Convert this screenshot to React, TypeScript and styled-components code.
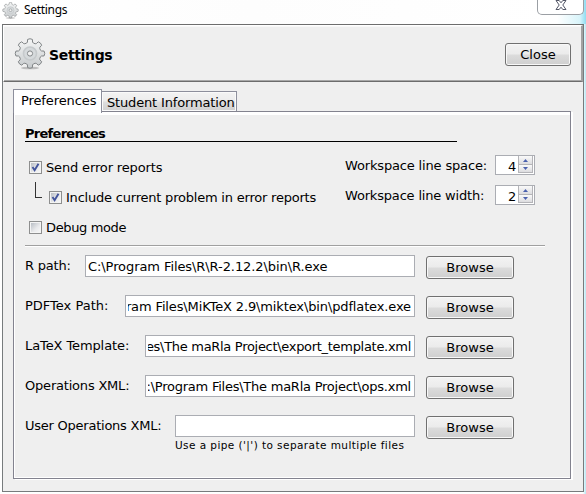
import React from "react";
import styled, { createGlobalStyle, css } from "styled-components";

const GlobalStyle = createGlobalStyle`
  * { box-sizing: border-box; }
  html, body { margin: 0; padding: 0; overflow: hidden; }
  body { font: 13px/16px Verdana, "DejaVu Sans", sans-serif; color: #000; background: #fff; }
`;

const Window = styled.div`
  width: 586px;
  height: 494px;
  display: flex;
  flex-direction: column;
  padding: 0 2px 2px 2px;
  background: linear-gradient(to right, #fff 0 583px, #e4f7fb 584px, #b5e7f3 586px);
`;

const TitleBar = styled.div`
  height: 24px;
  flex: none;
  display: flex;
  justify-content: space-between;
  align-items: flex-start;
  margin-right: -2px;
  padding-right: 2px;
  background: linear-gradient(to right, #fff 0, #fdfdfd 250px, #fff 555px, #d8f4fa 578px, #8edcf1 584px);
`;

const Caption = styled.div`
  display: flex;
  align-items: center;
  gap: 5px;
  height: 20px;
  font: 12px/16px "Segoe UI", "Noto Sans", sans-serif;
  letter-spacing: -0.3px;
`;

const WindowClose = styled.div`
  width: 47px;
  height: 15px;
  display: flex;
  justify-content: center;
  border: 1px solid #9b9fa4;
  border-top: 0;
  border-radius: 0 0 5px 5px;
  background: #fff;
`;

const Frame = styled.div`
  width: 582px;
  height: 468px;
  display: flex;
  flex-direction: column;
  border: 1px solid #777b7d;
  border-top-color: #6d6d6d;
  background: #efefef;
`;

const Header = styled.div`
  height: 57px;
  flex: none;
  display: flex;
  align-items: center;
  justify-content: space-between;
  padding: 2px 10px 0 10px;
  border: 1px solid #fff;
  border-right: 2px solid #a2a2a2;
  border-bottom: 1px solid #6c6c6c;
  box-shadow: inset 0 -1px #a8a8a8, inset 0 1px #f8f8f8;
`;

const Brand = styled.div`
  display: flex;
  align-items: center;
  gap: 3px;
  padding-bottom: 2px;
`;

const BrandName = styled.div`
  font-size: 14px;
  font-weight: bold;
  letter-spacing: -0.35px;
  padding-top: 2px;
`;

const Button = styled.button<{ $width: number }>`
  width: ${(p) => p.$width}px;
  height: 23px;
  flex: none;
  padding: 1px 0 0;
  border: 1px solid #707070;
  border-radius: 3px;
  background: linear-gradient(#f3f3f3 0, #ebebeb 49%, #dcdcdc 51%, #cfcfcf 100%);
  box-shadow: inset 0 0 0 1px #f8f8f8;
  font: inherit;
  color: #000;
`;

const Tabs = styled.div`
  display: flex;
  align-items: flex-end;
  height: 29px;
  flex: none;
  padding-left: 10px;
`;

const Tab = styled.div<{ $active?: boolean }>`
  display: flex;
  align-items: center;
  white-space: nowrap;
  border: 1px solid #8d8f9c;
  border-bottom: 0;
  ${(p) =>
    p.$active
      ? css`
          width: 89px;
          height: 24px;
          margin-bottom: -2px;
          padding: 0 0 1px 7px;
          background: #fff;
          position: relative;
        `
      : css`
          width: 136px;
          height: 20px;
          margin-left: -1px;
          padding: 3px 0 0 5px;
          background: linear-gradient(#f3f3f3 0, #ececec 48%, #dedede 52%, #d0d0d0 100%);
          box-shadow: inset 0 0 0 1px #fafafa;
        `}
`;

const Pane = styled.div`
  width: 558px;
  height: 368px;
  flex: none;
  display: flex;
  flex-direction: column;
  margin-left: 10px;
  border: 1px solid #83838f;
  box-shadow: inset 0 3px #fff, inset 1px -1px #fff, 2px 1px #fff;
  padding: 14px 0 0 11px;
`;

const SectionTitle = styled.div`
  width: 432px;
  height: 16px;
  flex: none;
  border-bottom: 1px solid #000;
  font-weight: bold;
`;

const Options = styled.div`
  display: flex;
  height: 104px;
  flex: none;
  width: 520px;
  border-bottom: 1px solid #a0a0a0;
  box-shadow: 0 1px #fff;
`;

const Checks = styled.div`
  width: 320px;
  padding-top: 11px;
`;

const CheckRow = styled.div<{ $nested?: boolean }>`
  height: 30px;
  display: flex;
  align-items: center;
  padding-left: ${(p) => (p.$nested ? 10 : 4)}px;
  gap: 7px;
`;

const Text = styled.span<{ $spacing?: number }>`
  white-space: nowrap;
  letter-spacing: ${(p) => p.$spacing ?? 0}px;
`;

const CheckItem = styled.div`
  display: flex;
  align-items: flex-start;
  height: 16px;
  gap: 4px;
`;

const Branch = styled.div`
  width: 7px;
  height: 16px;
  align-self: flex-start;
  margin-top: -1px;
  border-left: 1px solid #333;
  border-bottom: 1px solid #333;
`;

const Box = styled.div`
  width: 13px;
  height: 13px;
  margin-top: 1px;
  border: 1px solid #8e8f8f;
  padding: 1px;
  background: linear-gradient(135deg, #b9bec5, #e9eaec 60%, #f6f6f6) content-box, #f4f4f4;
  svg { display: block; }
`;

const Spins = styled.div`
  padding-top: 13px;
  display: flex;
  flex-direction: column;
  gap: 10px;
`;

const SpinRow = styled.div`
  width: 190px;
  height: 20px;
  display: flex;
  justify-content: space-between;
`;

const SpinLabel = styled(Text)`
  padding-top: 3px;
`;

const Spinner = styled.div`
  width: 40px;
  height: 20px;
  display: flex;
  border: 1px solid #abadb3;
  background: #fff;
  justify-content: flex-end;
  padding-right: 1px;
`;

const SpinValue = styled.div`
  width: 10px;
  padding-top: 3px;
`;

const Arrows = styled.div`
  width: 15px;
  height: 17px;
  padding: 0 1px 0 1px;
  background: #b4b4b8;
`;

const Arrow = styled.div<{ $down?: boolean }>`
  height: ${(p) => (p.$down ? 7 : 8)}px;
  margin-bottom: 1px;
  display: flex;
  align-items: center;
  justify-content: center;
  background: linear-gradient(#fafafa, #dcdcdf);
`;

const Paths = styled.div`
  display: flex;
  flex-direction: column;
  padding-top: 9px;
`;

const PathRow = styled.div`
  height: 40px;
  display: flex;
  align-items: flex-start;
`;

const PathLabel = styled.div<{ $width: number }>`
  width: ${(p) => p.$width}px;
  padding-top: 3px;
`;

const Field = styled.div<{ $width: number }>`
  width: ${(p) => p.$width}px;
  height: 22px;
  display: flex;
  padding: 3px 3px 0 2px;
  border: 1px solid #abadb3;
  background: #fff;
`;

const Clip = styled.div<{ $end?: boolean }>`
  width: 100%;
  overflow: hidden;
  display: flex;
  justify-content: ${(p) => (p.$end ? "flex-end" : "flex-start")};
`;

const ButtonSlot = styled.div`
  padding: 1px 0 0 11px;
`;

const FieldStack = styled.div`
  display: flex;
  flex-direction: column;
`;

const Hint = styled.div`
  height: 14px;
  font-size: 10.5px;
  line-height: 14px;
  margin-top: 1px;
  letter-spacing: 0.43px;
  white-space: nowrap;
`;

const GEAR = (() => {
  const pts: string[] = [];
  for (let i = 0; i < 8; i++) {
    const a = (i * Math.PI) / 4 - Math.PI / 2;
    const at = (r: number, d: number) =>
      `${(16 + r * Math.cos(a + d)).toFixed(2)} ${(15.5 + r * Math.sin(a + d)).toFixed(2)}`;
    pts.push(`${i ? "L" : "M"}${at(11, -0.3)}L${at(11.7, -0.22)}L${at(14.3, -0.17)}Q${at(15.4, 0)} ${at(14.3, 0.17)}L${at(11.7, 0.22)}L${at(11, 0.3)}`);
  }
  return pts.join("") + "Z";
})();

const Gear = ({ size, id }: { size: number; id: string }) => (
  <svg width={size} height={size} viewBox="0 0 32 32">
    <defs>
      <linearGradient id={id} x1="0" y1="0" x2="0" y2="1">
        <stop offset="0" stopColor="#f5f6f6" />
        <stop offset="1" stopColor="#c6cacc" />
      </linearGradient>
    </defs>
    <ellipse cx="16" cy="30" rx="9" ry="1.3" fill="#8c8c8c" opacity="0.5" />
    <path d={GEAR} fill={`url(#${id})`} stroke="#818587" strokeWidth="1" strokeLinejoin="round" />
    <circle cx="16" cy="15.5" r="6.5" fill="#d6dadc" stroke="#c6cacc" strokeWidth="1.6" />
    <circle cx="16" cy="15.5" r="2.6" fill="#f1f1f1" stroke="#85898b" strokeWidth="1" />
  </svg>
);

const Check = ({ label, checked, spacing }: { label: string; checked?: boolean; spacing?: number }) => (
  <CheckItem>
    <Box>
      {checked && (
        <svg width="9" height="9" viewBox="0 0 9 9">
          <path d="M1.5 4L3.6 7.2L7.5 0.8" fill="none" stroke="#42549c" strokeWidth="1.9" />
        </svg>
      )}
    </Box>
    <Text $spacing={spacing}>{label}</Text>
  </CheckItem>
);

const Spin = ({ label, value, spacing }: { label: string; value: number; spacing?: number }) => (
  <SpinRow>
    <SpinLabel $spacing={spacing}>{label}</SpinLabel>
    <Spinner>
      <SpinValue>{value}</SpinValue>
      <Arrows>
        <Arrow>
          <svg width="5" height="3" viewBox="0 0 5 3"><path d="M0 3L2.5 0L5 3Z" fill="#4a60ae" /></svg>
        </Arrow>
        <Arrow $down>
          <svg width="5" height="3" viewBox="0 0 5 3"><path d="M0 0H5L2.5 3Z" fill="#4a60ae" /></svg>
        </Arrow>
      </Arrows>
    </Spinner>
  </SpinRow>
);

const PATHS = [
  { label: "R path:", value: "C:\\Program Files\\R\\R-2.12.2\\bin\\R.exe", offset: 60, ls: -0.2, vs: -0.08 },
  { label: "PDFTex Path:", value: "ram Files\\MiKTeX 2.9\\miktex\\bin\\pdflatex.exe", offset: 100, end: true, ls: 0, vs: -0.13 },
  { label: "LaTeX Template:", value: "es\\The maRla Project\\export_template.xml", offset: 120, end: true, ls: -0.1, vs: -0.3 },
  { label: "Operations XML:", value: ":\\Program Files\\The maRla Project\\ops.xml", offset: 120, end: true, ls: -0.2, vs: -0.24 },
  { label: "User Operations XML:", value: "", offset: 150, ls: -0.24, vs: 0, hint: "Use a pipe ('|') to separate multiple files" },
];

export default function App() {
  return (
    <Window>
      <GlobalStyle />
      <TitleBar>
        <Caption>
          <Gear size={17} id="gearSmall" />
          Settings
        </Caption>
        <WindowClose>
          <svg width="12" height="11" viewBox="0 0 12 11">
            <path d="M1 .5H4.2L6 2.8L7.8 .5H11L7.8 5L11 9.5H7.8L6 7.2L4.2 9.5H1L4.2 5Z" fill="#fff" stroke="#535666" strokeWidth="1" />
          </svg>
        </WindowClose>
      </TitleBar>
      <Frame>
        <Header>
          <Brand>
            <Gear size={32} id="gearLarge" />
            <BrandName>Settings</BrandName>
          </Brand>
          <Button $width={66}>Close</Button>
        </Header>
        <Tabs>
          <Tab $active><Text $spacing={-0.1}>Preferences</Text></Tab>
          <Tab><Text $spacing={-0.16}>Student Information</Text></Tab>
        </Tabs>
        <Pane>
          <SectionTitle><Text $spacing={-0.72}>Preferences</Text></SectionTitle>
          <Options>
            <Checks>
              <CheckRow><Check label="Send error reports" checked spacing={-0.15} /></CheckRow>
              <CheckRow $nested>
                <Branch />
                <Check label="Include current problem in error reports" checked spacing={-0.21} />
              </CheckRow>
              <CheckRow><Check label="Debug mode" spacing={-0.36} /></CheckRow>
            </Checks>
            <Spins>
              <Spin label="Workspace line space:" value={4} spacing={-0.16} />
              <Spin label="Workspace line width:" value={2} spacing={-0.18} />
            </Spins>
          </Options>
          <Paths>
            {PATHS.map((p) => (
              <PathRow key={p.label}>
                <PathLabel $width={p.offset}><Text $spacing={p.ls}>{p.label}</Text></PathLabel>
                <FieldStack>
                  <Field $width={390 - p.offset}>
                    <Clip $end={p.end}><Text $spacing={p.vs}>{p.value}</Text></Clip>
                  </Field>
                  {p.hint && <Hint>{p.hint}</Hint>}
                </FieldStack>
                <ButtonSlot><Button $width={88}>Browse</Button></ButtonSlot>
              </PathRow>
            ))}
          </Paths>
        </Pane>
      </Frame>
    </Window>
  );
}
